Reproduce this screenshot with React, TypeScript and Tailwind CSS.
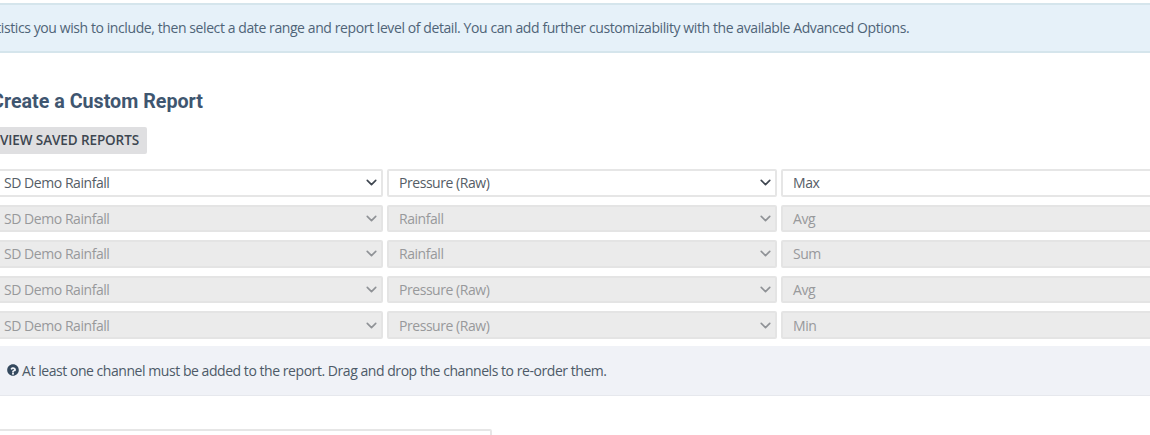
import { ChevronDown } from 'lucide-react';

const rows = [
  { site: 'SD Demo Rainfall', channel: 'Pressure (Raw)', stat: 'Max', enabled: true },
  { site: 'SD Demo Rainfall', channel: 'Rainfall', stat: 'Avg', enabled: false },
  { site: 'SD Demo Rainfall', channel: 'Rainfall', stat: 'Sum', enabled: false },
  { site: 'SD Demo Rainfall', channel: 'Pressure (Raw)', stat: 'Avg', enabled: false },
  { site: 'SD Demo Rainfall', channel: 'Pressure (Raw)', stat: 'Min', enabled: false },
];

function Field({ label, enabled, select, className }: { label: string; enabled: boolean; select?: boolean; className: string }) {
  return (
    <div
      className={`flex items-center justify-between h-[27.6px] rounded-[2px] border-2 ${
        enabled ? 'bg-white border-[#e6e6e6] text-[#555d66]' : 'bg-[#ebebeb] border-[#e4e4e4] text-[#98999b]'
      } ${className}`}
    >
      <span>{label}</span>
      {select && (
        <ChevronDown
          className={`w-[17px] h-[17px] mr-[1px] ${enabled ? 'text-[#3f4650]' : 'text-[#8f9296]'}`}
          strokeWidth={2.3}
        />
      )}
    </div>
  );
}

export default function App() {
  return (
    <div className="w-[1150px] h-[435px] overflow-hidden bg-white font-['Open_Sans',sans-serif] text-[14px] tracking-[-0.45px] text-[#4d5a68]">
      <div className="-mx-[20px] mt-[3px] h-[50px] pb-[2px] flex items-center bg-[#e6f1f9] border-y-2 border-[#d5e5ec]">
        <p className="whitespace-nowrap ml-[-150px] tracking-[-0.41px] text-[#4f6478]">
          Select the channels and statistics you wish to include, then select a date range and report level of detail. You can add further customizability with the available Advanced Options.
        </p>
      </div>

      <div className="-ml-[20px]">
        <h2 className="mt-[36px] ml-[11px] font-['Roboto',sans-serif] font-bold tracking-normal text-[19.7px] leading-[26px] text-[#3f5670]">
          Create a Custom Report
        </h2>

        <button className="block mt-[12px] h-[27px] w-[167px] pl-[20px] text-left rounded-[2px] bg-[#dfdfe1] font-semibold text-[13.5px] tracking-[-0.1px] text-[#3d4650] whitespace-nowrap">
          VIEW SAVED REPORTS
        </button>

        <div className="mt-[15px] flex flex-col gap-[8px]">
          {rows.map((row, i) => (
            <div key={i} className="flex gap-[5px]">
              <Field label={row.site} enabled={row.enabled} select className="w-[403px] pl-[22px] shrink-0" />
              <Field label={row.channel} enabled={row.enabled} select className="w-[390px] pl-[10px] ml-[-1px] shrink-0" />
              <Field label={row.stat} enabled={row.enabled} className="w-[420px] pl-[10px] ml-[-1px] shrink-0" />
            </div>
          ))}
        </div>

        <div className="mt-[7px] h-[50px] w-[1200px] flex items-center pl-[27px] gap-[3px] bg-[#f0f2f7] border-b border-[#e6e8ed] text-[#4d5a68]">
          <svg viewBox="0 0 512 512" className="w-[12px] h-[12px] text-[#34495e]" fill="currentColor">
            <path d="M256 8C119 8 8 119 8 256s111 248 248 248 248-111 248-248S393 8 256 8zm0 448c-24 0-44-20-44-44s20-44 44-44 44 20 44 44-20 44-44 44zm60-150c-20 12-22 18-22 34v6c0 7-5 12-12 12h-52c-7 0-12-5-12-12v-10c0-38 29-53 51-65 19-11 31-18 31-32 0-19-24-31-43-31-25 0-36 12-52 32-4 5-12 6-17 2l-31-24c-5-4-6-11-3-16 27-39 61-61 114-61 55 0 114 43 114 99 0 50-36 72-66 66z" />
          </svg>
          <span>At least one channel must be added to the report. Drag and drop the channels to re-order them.</span>
        </div>

        <div className="mt-[33px] h-[30px] w-[512px] bg-white border-2 border-[#e6e6e6] rounded-[2px]" />
      </div>
    </div>
  );
}
